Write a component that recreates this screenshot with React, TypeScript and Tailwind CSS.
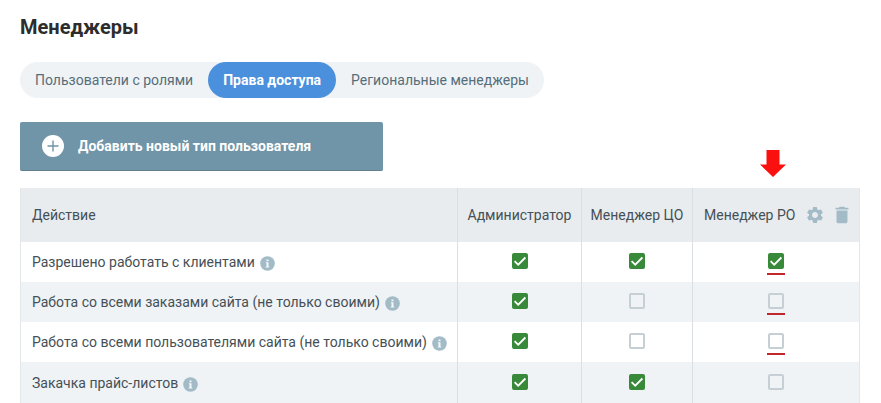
import { useState } from "react";
import { MdDelete, MdSettings } from "react-icons/md";
import clsx from "clsx";

const tabs = ["Пользователи с ролями", "Права доступа", "Региональные менеджеры"];

const roles = ["Администратор", "Менеджер ЦО", "Менеджер РО"];

const initialRights = [
  { title: "Разрешено работать с клиентами", access: [true, true, true], marked: true },
  { title: "Работа со всеми заказами сайта (не только своими)", access: [true, false, false], marked: true },
  { title: "Работа со всеми пользователями сайта (не только своими)", access: [true, false, false], marked: true },
  { title: "Закачка прайс-листов", access: [true, true, false], marked: false },
];

const InfoIcon = () => (
  <svg viewBox="0 0 15 15" className="mt-0.5 size-[15px] shrink-0" aria-hidden="true">
    <circle cx="7.5" cy="7.5" r="7.3" fill="#a3bbc7" />
    <path d="M6.5 3.4h2v1.8h-2zM5.9 6.3h2.600v4.200h.7v1H5.800v-1h.7V7.300h-.6z" fill="#f4f7f9" />
  </svg>
);

type CheckProps = {
  label: string;
  checked: boolean;
  marked: boolean;
  onChange: () => void;
};

const Check = ({ label, checked, marked, onChange }: CheckProps) => (
  <span className="relative block size-4 mx-auto mb-0.5">
    <input
      type="checkbox"
      aria-label={label}
      checked={checked}
      onChange={onChange}
      className="block size-4 appearance-none rounded-xs border-2 border-[#c6d0d4] checked:border-[#388a3a] checked:bg-[#388a3a]"
    />
    {checked && (
      <svg viewBox="0 0 16 16" className="absolute inset-0 size-4 pointer-events-none" aria-hidden="true">
        <path d="M2.600 8.200l3.600 3.500 7.200-7.200" fill="none" stroke="#fff" strokeWidth="1.800" />
      </svg>
    )}
    {marked && <span className="absolute -inset-x-px top-5 h-0.5 bg-[#c1272d]" />}
  </span>
);

const App = () => {
  const [activeTab, setActiveTab] = useState(1);
  const [rights, setRights] = useState(initialRights);

  const toggle = (row: number, col: number) => {
    setRights(
      rights.map((right, i) =>
        i === row ? { ...right, access: right.access.map((v, j) => (j === col ? !v : v)) } : right
      )
    );
  };

  return (
    <main className="h-screen overflow-hidden bg-white pl-5 pr-[21px] pt-[13px] font-[Roboto,sans-serif] text-sm text-[#455056]">
      <h1 className="text-xl leading-7 font-bold text-[#2d2d2d]">Менеджеры</h1>

      {/* Tabs */}
      <nav className="mt-[21px] flex w-fit rounded-full bg-[#eff3f6]">
        {tabs.map((tab, i) => (
          <button
            key={tab}
            onClick={() => setActiveTab(i)}
            className={clsx(
              "h-9 rounded-full px-[15px]",
              i === activeTab ? "bg-[#4a90dc] font-bold text-white" : "text-[#566e7a]"
            )}
          >
            {tab}
          </button>
        ))}
      </nav>

      <button className="mt-6 flex h-[49px] items-center gap-3.5 rounded-xs border-b border-[#627f90] bg-[#7094a8] pl-[22px] pr-[72px] font-bold text-white">
        <svg viewBox="0 0 22 22" className="size-[22px]" aria-hidden="true">
          <circle cx="11" cy="11" r="11" fill="#fff" />
          <path d="M11 5.5v11M5.5 11h11" stroke="#7094a8" strokeWidth="1.4" />
        </svg>
        Добавить новый тип пользователя
      </button>

      {/* Access rights */}
      <table className="mt-[17px] w-full table-fixed border-x border-[#e2e7ea]">
        <thead>
          <tr className="h-[54px] bg-[#e8ecef]">
            <th className="pl-[11px] text-left font-normal">Действие</th>
            {roles.map((role, i) => (
              <th
                key={role}
                className={clsx(
                  "relative border-l border-[#d9dfe2] font-normal whitespace-nowrap",
                  i === 0 && "w-[124px]",
                  i === 1 && "w-[111px]",
                  i === 2 && "w-[167px] pl-[11px]"
                )}
              >
                {i === 2 ? (
                  <div className="flex items-center">
                    {role}
                    <button aria-label="Настройки" className="ml-2.5 text-[#a3bbc7]">
                      <MdSettings className="size-5" />
                    </button>
                    <button aria-label="Удалить" className="ml-1.5 text-[#a3bbc7]">
                      <MdDelete className="size-[22px]" />
                    </button>
                    <svg viewBox="0 0 26 27" className="absolute bottom-full left-[67px] mb-[11px] w-[26px]" aria-hidden="true">
                      <path d="M6.500 0h13v14.500H26L13 27 0 14.500h6.500z" fill="#fb1010" />
                    </svg>
                  </div>
                ) : (
                  role
                )}
              </th>
            ))}
          </tr>
        </thead>
        <tbody>
          {rights.map((right, row) => (
            <tr key={right.title} className="h-10 last:h-[42px] even:bg-[#eff3f6]">
              <td className="pl-[11px] whitespace-nowrap">
                <span className="flex items-center gap-[5px]">
                  {right.title}
                  <InfoIcon />
                </span>
              </td>
              {right.access.map((checked, col) => (
                <td key={roles[col]} className="border-l border-[#d9dfe2]">
                  <Check
                    label={`${right.title}: ${roles[col]}`}
                    checked={checked}
                    marked={right.marked && col === 2}
                    onChange={() => toggle(row, col)}
                  />
                </td>
              ))}
            </tr>
          ))}
        </tbody>
      </table>
    </main>
  );
};

export default App;
